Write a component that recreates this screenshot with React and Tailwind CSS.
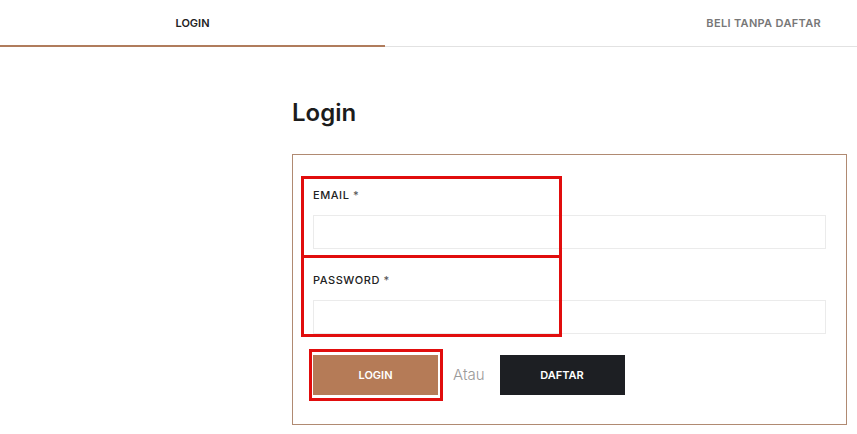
import React from 'react';

const font = { fontFamily: 'Inter, "Noto Sans", sans-serif' };

const Field = ({ label, type }) => (
  <div>
    <label className="block h-[20px] leading-[20px] text-[11px] font-medium tracking-[0.05em] text-[#222] mb-[10px]">
      {label} <span className="text-[#555]">*</span>
    </label>
    <input type={type} className="block w-full h-[34px] border border-[#ebebeb] bg-white outline-none px-3 text-sm" />
  </div>
);

const App = () => {
  return (
    <div className="w-[857px] h-[434px] bg-white overflow-hidden" style={font}>
      {/* Tabs */}
      <div className="flex h-[47px]">
        <div className="w-[385px] flex items-center justify-center border-b-2 border-[#b07c5c] text-[11px] font-semibold text-[#222] pt-[2px]">
          LOGIN
        </div>
        <div className="flex-1 flex items-center justify-end pr-[36px] border-b border-[#e2e2e2] text-[11px] font-semibold text-[#777] tracking-[0.03em] pt-[1px]">
          BELI TANPA DAFTAR
        </div>
      </div>

      <div className="pl-[292px] pr-[10px]">
        <h1 className="mt-[50px] h-[32px] leading-[32px] text-[24px] font-semibold text-[#1c1c1c]">Login</h1>

        <div className="relative mt-[25px] border border-[#b08a72] pt-[30px] px-[20px] pb-[29px]">
          <div className="flex flex-col gap-[21px]">
            <Field label="EMAIL" type="email" />
            <Field label="PASSWORD" type="password" />
          </div>

          <div className="flex items-center mt-[21px]">
            <button className="w-[125px] h-[40px] bg-[#b57b57] text-white text-[11px] font-semibold">LOGIN</button>
            <span className="ml-[15px] text-[15px] font-light text-[#9a9a9a]">Atau</span>
            <button className="ml-[15px] w-[125px] h-[40px] bg-[#1d1f23] text-white text-[11px] font-semibold">DAFTAR</button>
          </div>

          {/* annotation outlines */}
          <div className="absolute left-[8px] top-[21px] w-[261px] h-[82px] border-[3px] border-[#e10d0d]" />
          <div className="absolute left-[8px] top-[100px] w-[261px] h-[82px] border-[3px] border-[#e10d0d]" />
          <div className="absolute left-[16px] top-[194px] w-[134px] h-[52px] border-[3px] border-[#e10d0d]" />
        </div>
      </div>
    </div>
  );
};

export default App;
